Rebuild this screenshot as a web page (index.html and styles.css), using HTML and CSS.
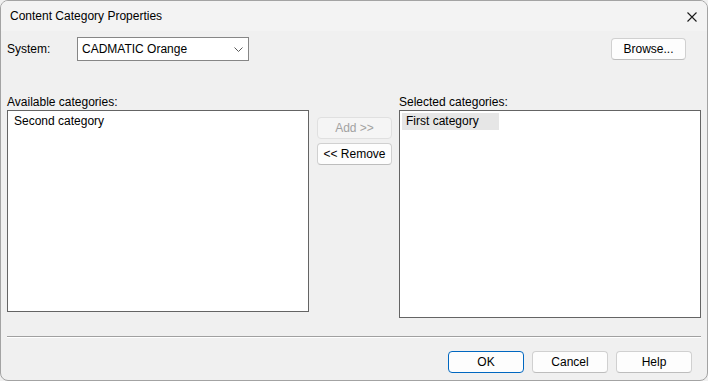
FILE: index.html
```html
<!DOCTYPE html>
<html lang="en">
<head>
    <meta charset="UTF-8">
    <title>Content Category Properties</title>
    <link rel="stylesheet" href="styles.css">
</head>
<body>
    <div class="window">
        <div class="titlebar">
            <span class="title">Content Category Properties</span>
            <svg class="close" width="10" height="10" viewBox="0 0 10 10">
                <path d="M0.5 0.5 L9.5 9.5 M9.5 0.5 L0.5 9.5" stroke="#1a1a1a" stroke-width="1.1" fill="none"/>
            </svg>
        </div>

        <div class="content">
            <div class="system-row">
                <span class="label system-label">System:</span>
                <div class="combo">
                    <span>CADMATIC Orange</span>
                    <svg class="chevron" width="9" height="5" viewBox="0 0 9 5">
                        <path d="M0.5 0.5 L4.5 4.5 L8.5 0.5" stroke="#5a5a5a" stroke-width="1" fill="none"/>
                    </svg>
                </div>
                <button class="btn browse">Browse...</button>
            </div>

            <div class="lists">
                <div class="list-col">
                    <div class="label">Available categories:</div>
                    <div class="listbox short">
                        <div class="item">Second category</div>
                    </div>
                </div>

                <div class="mid-col">
                    <button class="btn" disabled>Add &gt;&gt;</button>
                    <button class="btn">&lt;&lt; Remove</button>
                </div>

                <div class="list-col">
                    <div class="label">Selected categories:</div>
                    <div class="listbox tall">
                        <div class="item selected">First category</div>
                    </div>
                </div>
            </div>

            <div class="separator"></div>

            <div class="footer">
                <button class="btn default">OK</button>
                <button class="btn">Cancel</button>
                <button class="btn">Help</button>
            </div>
        </div>
    </div>
</body>
</html>
```

FILE: styles.css
```css
* {
    margin: 0;
    padding: 0;
    box-sizing: border-box;
}

body {
    font-family: 'Liberation Sans', Arial, sans-serif;
    font-size: 12px;
    color: #000;
    background: #f0f0f0;
}

.window {
    width: 708px;
    height: 381px;
    border: 1px solid #a3a3a3;
    border-radius: 8px;
    background: #f0f0f0;
    overflow: hidden;
}

.titlebar {
    height: 30px;
    background: #f3f3f3;
    display: flex;
    align-items: center;
    justify-content: space-between;
    padding: 0 10px 0 9px;
}

.title {
    line-height: 15px;
    margin-top: 1px;
}

.close {
    display: block;
    margin-top: 1px;
}

.content {
    padding: 6px 6px 0 6px;
}

.system-row {
    display: flex;
    align-items: center;
    height: 24px;
}

.system-label {
    width: 70px;
}

.combo {
    width: 172px;
    height: 24px;
    background: #fff;
    border: 1px solid #868686;
    display: flex;
    align-items: center;
    justify-content: space-between;
    padding: 0 5px 0 4px;
}

.chevron {
    display: block;
}

.btn {
    font-family: inherit;
    font-size: 12px;
    color: #000;
    width: 75px;
    height: 22px;
    background: #fdfdfd;
    border: 1px solid #d0d0d0;
    border-bottom-color: #bdbdbd;
    border-radius: 4px;
}

.btn:disabled {
    background: #f5f5f5;
    color: #a2a2a2;
    border-color: #e0e0e0;
}

.btn.default {
    border: 1px solid #0067c0;
}

.browse {
    margin-left: auto;
    margin-right: 15px;
}

.lists {
    display: flex;
    align-items: flex-start;
    margin-top: 33px;
}

.label {
    line-height: 16px;
}

.list-col {
    width: 302px;
    display: flex;
    flex-direction: column;
}

.listbox {
    background: #fff;
    border: 1px solid #646464;
    padding: 2px;
}

.listbox.short {
    height: 202px;
}

.listbox.tall {
    height: 208px;
}

.item {
    height: 17px;
    line-height: 17px;
    padding-left: 4px;
}

.item.selected {
    width: 97px;
    background: #e6e6e6;
}

.mid-col {
    display: flex;
    flex-direction: column;
    gap: 4px;
    margin: 23px 7px 0 8px;
}

.separator {
    margin-top: 18px;
    height: 2px;
    border-top: 1px solid #a0a0a0;
    border-bottom: 1px solid #fff;
}

.footer {
    display: flex;
    justify-content: flex-end;
    gap: 8px;
    margin-top: 13px;
    padding-right: 9px;
}

.footer .btn {
    width: 76px;
}
```
